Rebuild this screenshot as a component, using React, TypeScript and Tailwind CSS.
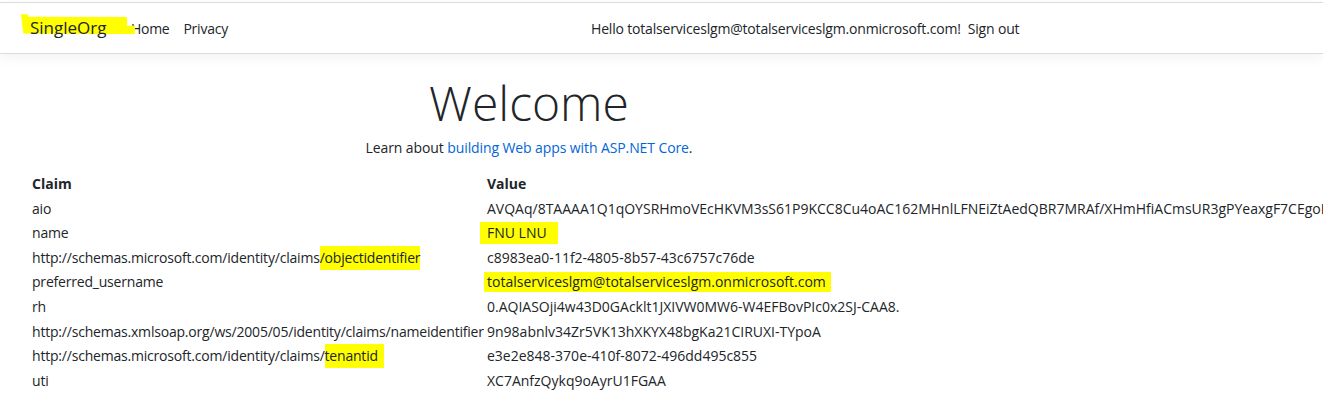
import React from 'react';

const claims: Array<{ claim: React.ReactNode; value: React.ReactNode }> = [
  {
    claim: 'aio',
    value: 'AVQAq/8TAAAA1Q1qOYSRHmoVEcHKVM3sS61P9KCC8Cu4oAC162MHnlLFNEiZtAedQBR7MRAf/XHmHfiACmsUR3gPYeaxgF7CEgoKl',
  },
  {
    claim: 'name',
    value: <span className="-ml-[7px] bg-[#ffff00] pl-[7px] pr-[11px] pb-[2px] pt-[1px]">FNU LNU</span>,
  },
  {
    claim: (
      <>
        http://schemas.microsoft.com/identity/claims
        <span className="bg-[#ffff00] pt-[2px] pb-[3px]">/objectidentifier</span>
      </>
    ),
    value: 'c8983ea0-11f2-4805-8b57-43c6757c76de',
  },
  {
    claim: 'preferred_username',
    value: (
      <span className="-ml-[3px] bg-[#ffff00] pl-[3px] pr-[5px] pb-[1px]">
        totalserviceslgm@totalserviceslgm.onmicrosoft.com
      </span>
    ),
  },
  { claim: 'rh', value: '0.AQIASOji4w43D0GAcklt1JXIVW0MW6-W4EFBovPIc0x2SJ-CAA8.' },
  {
    claim: 'http://schemas.xmlsoap.org/ws/2005/05/identity/claims/nameidentifier',
    value: '9n98abnlv34Zr5VK13hXKYX48bgKa21CIRUXI-TYpoA',
  },
  {
    claim: (
      <>
        http://schemas.microsoft.com/identity/claims/
        <span className="bg-[#ffff00] pr-[6px] pt-[2px] pb-[3px]">tenantid</span>
      </>
    ),
    value: 'e3e2e848-370e-410f-8072-496dd495c855',
  },
  { claim: 'uti', value: 'XC7AnfzQykq9oAyrU1FGAA' },
];

export default function App() {
  return (
    <div className="h-[410px] w-[1323px] overflow-hidden bg-white font-['Open_Sans',sans-serif] text-[#212529]">
      {/* Navbar */}
      <div className="mt-[2px] h-[52px] border-t border-b border-[#dcdcdc] shadow-[0_4px_12px_rgba(0,0,0,0.05)] flex items-center">
        <div className="flex w-[591px] shrink-0 items-center pl-[21px]">
          <span className="relative w-[110px] text-[17px]">
            <span className="absolute left-0 top-[-1px] h-[20px] w-[114px] bg-[#ffff00] [clip-path:polygon(0_0,6%_0,6%_12%,93%_14%,93%_58%,100%_58%,100%_100%,2%_96%)]" />
            <span className="relative pl-[9px]">SingleOrg</span>
          </span>
          <span className="text-[14px] tracking-[-0.3px]">Home</span>
          <span className="ml-[14px] text-[14px] tracking-[-0.2px]">Privacy</span>
        </div>
        <div className="flex items-center text-[14px] tracking-[-0.18px]">
          <span>Hello totalserviceslgm@totalserviceslgm.onmicrosoft.com!</span>
          <span className="ml-[7px]">Sign out</span>
        </div>
      </div>

      {/* Main */}
      <div className="ml-[32px] w-[994px] pt-[20px] text-center">
        <h1 className="text-[48px] font-light leading-[58px]">Welcome</h1>
        <p className="mt-[5px] text-[14px] leading-[21px] tracking-[-0.1px]">
          Learn about <span className="text-[#0366d6]">building Web apps with ASP.NET Core</span>.
        </p>
      </div>

      <div className="ml-[32px] mt-[14px] grid grid-cols-[455px_auto] whitespace-nowrap text-[14px] leading-[24.6px]">
        <div className="font-bold">Claim</div>
        <div className="font-bold">Value</div>
        {claims.map((row, i) => (
          <React.Fragment key={i}>
            <div className="tracking-[-0.2px]">{row.claim}</div>
            <div>{row.value}</div>
          </React.Fragment>
        ))}
      </div>
    </div>
  );
}
